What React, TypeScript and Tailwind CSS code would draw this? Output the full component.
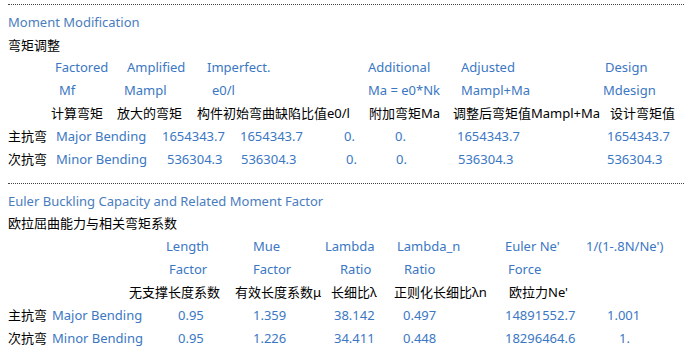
import type { ReactNode } from "react";

const blue = "text-[#3b77c3]";

function C({ w, k, children }: { w?: string; k?: boolean; children: ReactNode }) {
  return (
    <span className={`shrink-0 whitespace-nowrap ${w ?? ""} ${k ? "text-black" : blue}`}>
      {children}
    </span>
  );
}

function Row({ children, h = "h-[23px]" }: { children: ReactNode; h?: string }) {
  return <div className={`flex items-center ${h} leading-[23px]`}>{children}</div>;
}

function Dots({ mt }: { mt: string }) {
  return <div className={`${mt} ml-[8px] w-[676px] border-t border-dotted border-[#444]`} />;
}

export default function App() {
  return (
    <div
      className="w-[689px] h-[359px] bg-white text-[13px] overflow-hidden"
      style={{ fontFamily: '"Noto Sans", "Noto Sans CJK SC", sans-serif' }}
    >
      <Dots mt="mt-[4px]" />
      <div className="mt-[6px]">
        <Row>
          <span className="ml-[8px] text-[#4a7dbd]">Moment Modification</span>
        </Row>
        <Row h="h-[22px]">
          <span className="ml-[8px] text-black">弯矩调整</span>
        </Row>

        <Row>
          <span className="w-[55px] shrink-0" />
          <C w="w-[72px]">Factored</C>
          <C w="w-[80px]">Amplified</C>
          <C w="w-[161px]">Imperfect.</C>
          <C w="w-[93px]">Additional</C>
          <C w="w-[144px]">Adjusted</C>
          <C>Design</C>
        </Row>
        <Row>
          <span className="w-[59px] shrink-0" />
          <C w="w-[65px]">Mf</C>
          <C w="w-[88px]">Mampl</C>
          <C w="w-[156px]">e0/l</C>
          <C w="w-[93px]">Ma = e0*Nk</C>
          <C w="w-[142px]">Mampl+Ma</C>
          <C>Mdesign</C>
        </Row>
        <Row>
          <span className="w-[51px] shrink-0" />
          <C k w="w-[66px]">计算弯矩</C>
          <C k w="w-[80px]">放大的弯矩</C>
          <C k w="w-[172px]">构件初始弯曲缺陷比值e0/l</C>
          <C k w="w-[84px]">附加弯矩Ma</C>
          <C k w="w-[157px]">调整后弯矩值Mampl+Ma</C>
          <C k>设计弯矩值</C>
        </Row>
        <Row>
          <span className="w-[8px] shrink-0" />
          <C k w="w-[48px]">主抗弯</C>
          <C w="w-[106px]">Major Bending</C>
          <C w="w-[78px]">1654343.7</C>
          <C w="w-[104px]">1654343.7</C>
          <C w="w-[51px]">0.</C>
          <C w="w-[62px]">0.</C>
          <C w="w-[150px]">1654343.7</C>
          <C>1654343.7</C>
        </Row>
        <Row>
          <span className="w-[8px] shrink-0" />
          <C k w="w-[48px]">次抗弯</C>
          <C w="w-[111px]">Minor Bending</C>
          <C w="w-[74px]">536304.3</C>
          <C w="w-[105px]">536304.3</C>
          <C w="w-[50px]">0.</C>
          <C w="w-[62px]">0.</C>
          <C w="w-[149px]">536304.3</C>
          <C>536304.3</C>
        </Row>
      </div>

      <Dots mt="mt-[12px]" />
      <div className="mt-[6px]">
        <Row h="h-[22px]">
          <span className="ml-[8px] text-[#4a7dbd]">
            Euler Buckling Capacity and Related Moment Factor
          </span>
        </Row>
        <Row>
          <span className="ml-[8px] text-black">欧拉屈曲能力与相关弯矩系数</span>
        </Row>

        <Row>
          <span className="w-[166px] shrink-0" />
          <C w="w-[87px]">Length</C>
          <C w="w-[72px]">Mue</C>
          <C w="w-[72px]">Lambda</C>
          <C w="w-[108px]">Lambda_n</C>
          <C w="w-[81px]">Euler Ne'</C>
          <C>1/(1-.8N/Ne')</C>
        </Row>
        <Row>
          <span className="w-[169px] shrink-0" />
          <C w="w-[84px]">Factor</C>
          <C w="w-[87px]">Factor</C>
          <C w="w-[64px]">Ratio</C>
          <C w="w-[104px]">Ratio</C>
          <C>Force</C>
        </Row>
        <Row>
          <span className="w-[129px] shrink-0" />
          <C k w="w-[106px]">无支撑长度系数</C>
          <C k w="w-[96px]">有效长度系数μ</C>
          <C k w="w-[63px]">长细比λ</C>
          <C k w="w-[115px]">正则化长细比λn</C>
          <C k>欧拉力Ne'</C>
        </Row>
        <Row>
          <span className="w-[8px] shrink-0" />
          <C k w="w-[44px]">主抗弯</C>
          <C w="w-[126px]">Major Bending</C>
          <C w="w-[75px]">0.95</C>
          <C w="w-[81px]">1.359</C>
          <C w="w-[69px]">38.142</C>
          <C w="w-[102px]">0.497</C>
          <C w="w-[102px]">14891552.7</C>
          <C>1.001</C>
        </Row>
        <Row>
          <span className="w-[8px] shrink-0" />
          <C k w="w-[44px]">次抗弯</C>
          <C w="w-[126px]">Minor Bending</C>
          <C w="w-[75px]">0.95</C>
          <C w="w-[81px]">1.226</C>
          <C w="w-[69px]">34.411</C>
          <C w="w-[102px]">0.448</C>
          <C w="w-[114px]">18296464.6</C>
          <C>1.</C>
        </Row>
      </div>
    </div>
  );
}
